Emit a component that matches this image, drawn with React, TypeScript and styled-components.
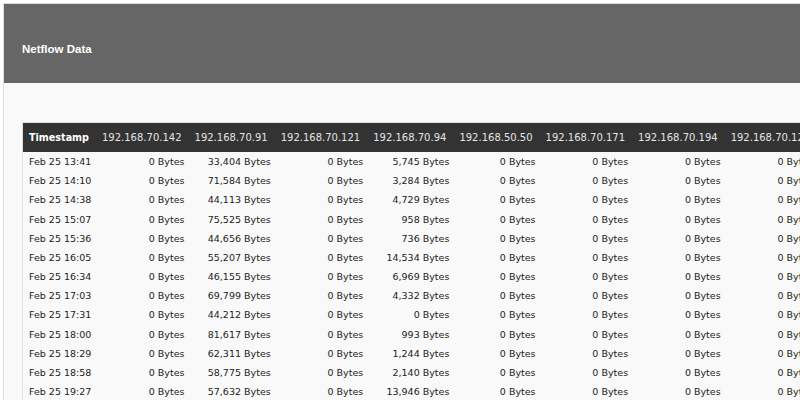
import React from "react";
import styled, { createGlobalStyle } from "styled-components";

const Global = createGlobalStyle`
  html, body { margin: 0; padding: 0; overflow: hidden; background: #ffffff; }
  #root { padding: 3px; }
`;

const Card = styled.div`
  border: 1px solid #dedede;
  background: #f9f9f9;
  width: max-content;
  min-width: 793px;
  min-height: 420px;
`;

const CardHeader = styled.div`
  box-sizing: border-box;
  height: 79px;
  padding: 10px 0 0 18px;
  background: #666666;
  display: flex;
  align-items: center;
`;

const Title = styled.h2`
  margin: 0;
  font-family: "Liberation Sans", Arial, sans-serif;
  font-weight: bold;
  font-size: 11.5px;
  color: #ffffff;
`;

const CardBody = styled.div`
  padding: 39px 18px 0 18px;
`;

const Table = styled.table`
  border-collapse: collapse;
  font-family: "DejaVu Sans", sans-serif;
  font-size: 9.5px;
  color: #222;
  border-left: 1px solid #e2e2e2;
  border-top: 1px solid #e2e2e2;
`;

const HeadCell = styled.th<{ $bold?: boolean }>`
  background: #333333;
  color: ${(p) => (p.$bold ? "#ffffff" : "#e4e4e4")};
  font-weight: ${(p) => (p.$bold ? "bold" : "normal")};
  font-size: ${(p) => (p.$bold ? "9.6px" : "10px")};
  text-align: left;
  height: 29px;
  padding: 0 7px 0 6px;
  white-space: nowrap;
`;

const Cell = styled.td<{ $num?: boolean }>`
  text-align: ${(p) => (p.$num ? "right" : "left")};
  line-height: 19.17px;
  padding: 0 4px 0 6px;
  white-space: nowrap;
`;

const ips = [
  "192.168.70.142",
  "192.168.70.91",
  "192.168.70.121",
  "192.168.70.94",
  "192.168.50.50",
  "192.168.70.171",
  "192.168.70.194",
  "192.168.70.123",
  "192.168.70.88",
];

const rows: [string, string, string][] = [
  ["Feb 25 13:41", "33,404", "5,745"],
  ["Feb 25 14:10", "71,584", "3,284"],
  ["Feb 25 14:38", "44,113", "4,729"],
  ["Feb 25 15:07", "75,525", "958"],
  ["Feb 25 15:36", "44,656", "736"],
  ["Feb 25 16:05", "55,207", "14,534"],
  ["Feb 25 16:34", "46,155", "6,969"],
  ["Feb 25 17:03", "69,799", "4,332"],
  ["Feb 25 17:31", "44,212", "0"],
  ["Feb 25 18:00", "81,617", "993"],
  ["Feb 25 18:29", "62,311", "1,244"],
  ["Feb 25 18:58", "58,775", "2,140"],
  ["Feb 25 19:27", "57,632", "13,946"],
  ["Feb 25 19:56", "49,870", "2,316"],
  ["Feb 25 20:24", "52,118", "1,087"],
];

export default function App() {
  return (
    <>
      <Global />
      <Card>
        <CardHeader>
          <Title>Netflow Data</Title>
        </CardHeader>
        <CardBody>
          <Table>
            <thead>
              <tr>
                <HeadCell $bold>Timestamp</HeadCell>
                {ips.map((ip) => (
                  <HeadCell key={ip}>{ip}</HeadCell>
                ))}
              </tr>
            </thead>
            <tbody>
              {rows.map(([ts, a, b]) => (
                <tr key={ts}>
                  <Cell>{ts}</Cell>
                  {ips.map((ip, i) => (
                    <Cell $num key={ip}>
                      {i === 1 ? a : i === 3 ? b : "0"} Bytes
                    </Cell>
                  ))}
                </tr>
              ))}
            </tbody>
          </Table>
        </CardBody>
      </Card>
    </>
  );
}
